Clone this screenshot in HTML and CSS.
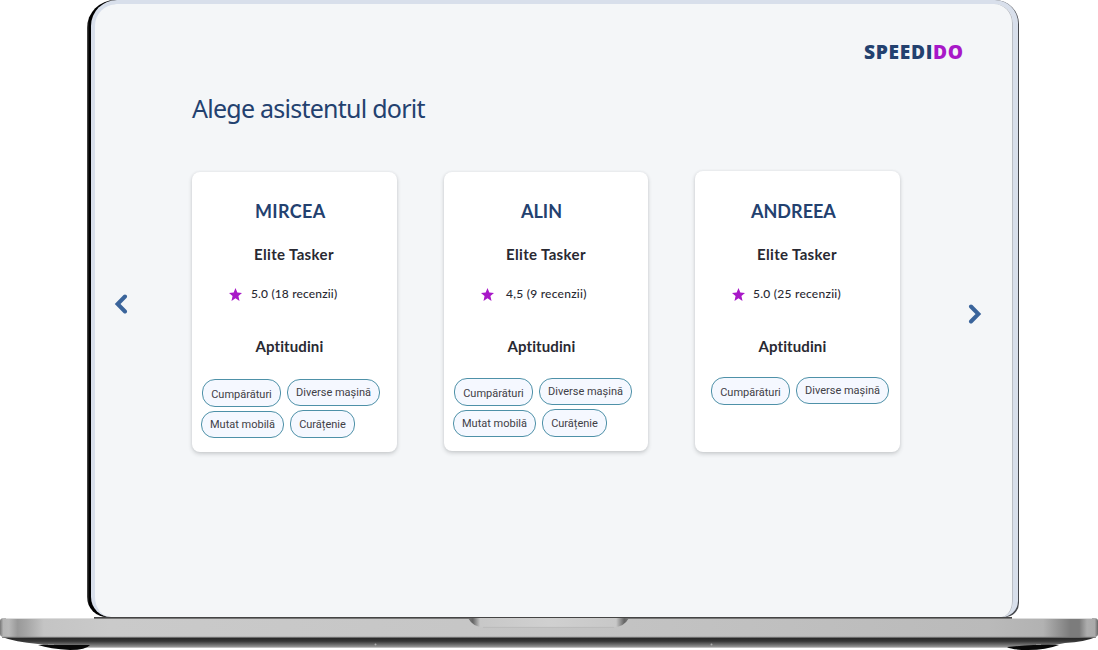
FILE: index.html
```html
<!DOCTYPE html>
<html lang="ro">
<head>
<meta charset="utf-8">
<title>Speedido</title>
<link rel="stylesheet" href="styles.css">
</head>
<body>
<svg class="symbols" width="0" height="0">
  <symbol id="star" viewBox="0 0 12 12"><path d="M6 0 7.7 4.1 12 4.5 8.7 7.4 9.7 12 6 9.5 2.3 12 3.3 7.4 0 4.5 4.3 4.1Z" fill="#a818c8"/></symbol>
</svg>
<div class="laptop">
  <div class="lid">
    <main class="screen">
      <header class="brand"><span class="logo">SPEEDI<span class="logo-accent">DO</span></span></header>
      <h1 class="title"><span>Alege asistentul dorit</span></h1>
      <div class="carousel">
        <button class="arrow prev" aria-label="Înapoi"><svg width="14" height="20" viewBox="0 0 14 20"><path d="M11 2.5 3.6 10 11 17.5" fill="none" stroke="#3a649b" stroke-width="4" stroke-linecap="round" stroke-linejoin="miter"/></svg></button>
        <section class="card">
          <h2 class="name mircea">MIRCEA</h2>
          <p class="role">Elite Tasker</p>
          <p class="rating"><svg class="star"><use href="#star"/></svg><span class="score r-mircea">5.0 (18 recenzii)</span></p>
          <h3 class="skills-title">Aptitudini</h3>
          <div class="chips">
            <div class="chip-row"><span class="chip buy">Cumpărături</span><span class="chip misc">Diverse mașină</span></div>
            <div class="chip-row second"><span class="chip move">Mutat mobilă</span><span class="chip clean">Curățenie</span></div>
          </div>
        </section>
        <section class="card card-alin">
          <h2 class="name alin">ALIN</h2>
          <p class="role">Elite Tasker</p>
          <p class="rating"><svg class="star"><use href="#star"/></svg><span class="score r-alin">4,5 (9 recenzii)</span></p>
          <h3 class="skills-title">Aptitudini</h3>
          <div class="chips">
            <div class="chip-row"><span class="chip buy">Cumpărături</span><span class="chip misc">Diverse mașină</span></div>
            <div class="chip-row second"><span class="chip move">Mutat mobilă</span><span class="chip clean">Curățenie</span></div>
          </div>
        </section>
        <section class="card card-andreea">
          <h2 class="name andreea">ANDREEA</h2>
          <p class="role">Elite Tasker</p>
          <p class="rating"><svg class="star"><use href="#star"/></svg><span class="score r-andreea">5.0 (25 recenzii)</span></p>
          <h3 class="skills-title">Aptitudini</h3>
          <div class="chips">
            <div class="chip-row"><span class="chip buy">Cumpărături</span><span class="chip misc">Diverse mașină</span></div>
          </div>
        </section>
        <button class="arrow next" aria-label="Înainte"><svg width="14" height="20" viewBox="0 0 14 20"><path d="M3 2.5 10.4 10 3 17.5" fill="none" stroke="#3a649b" stroke-width="4" stroke-linecap="round" stroke-linejoin="miter"/></svg></button>
      </div>
    </main>
  </div>
  <svg class="base" width="1098" height="33" viewBox="0 617 1098 33">
    <defs>
      <linearGradient id="metal" x1="0" x2="1" y1="0" y2="0">
        <stop offset="0" stop-color="#777"/><stop offset=".003" stop-color="#b5b5b5"/><stop offset=".008" stop-color="#b9b9b9"/><stop offset=".016" stop-color="#999"/><stop offset=".024" stop-color="#a5a5a5"/><stop offset=".04" stop-color="#c4c4c4"/><stop offset=".1" stop-color="#cacaca"/><stop offset=".5" stop-color="#c5c5c5"/><stop offset=".9" stop-color="#bababa"/><stop offset=".95" stop-color="#b2b2b2"/><stop offset=".975" stop-color="#7c7c7c"/><stop offset=".983" stop-color="#7c7c7c"/><stop offset=".99" stop-color="#adadad"/><stop offset=".997" stop-color="#aaa"/><stop offset="1" stop-color="#666"/>
      </linearGradient>
      <linearGradient id="under" x1="0" x2="0" y1="0" y2="1">
        <stop offset="0" stop-color="#555"/><stop offset=".12" stop-color="#292929"/><stop offset=".38" stop-color="#363636"/><stop offset=".65" stop-color="#666"/><stop offset=".9" stop-color="#959595"/><stop offset="1" stop-color="#e0e0e0"/>
      </linearGradient>
      <linearGradient id="notch" x1="0" x2="1" y1="0" y2="0">
        <stop offset="0" stop-color="#777"/><stop offset=".03" stop-color="#666"/><stop offset=".075" stop-color="#c8c8c8"/><stop offset=".5" stop-color="#d0d0d0"/><stop offset=".92" stop-color="#c8c8c8"/><stop offset=".97" stop-color="#666"/><stop offset="1" stop-color="#777"/>
      </linearGradient>
    </defs>
    <path d="M2 637H1096Q1085 642 1065 643L1040 648H60L38 644Q15 642 2 637Z" fill="url(#under)"/>
    <path d="M38 645H90Q86 650 70 650Q50 649 38 645Z" fill="#080808"/>
    <path d="M1007 647Q1040 644 1059 645Q1046 650 1028 650Q1012 650 1007 647Z" fill="#080808"/>
    <path d="M48 644.5H54M1036 644.5H1041" stroke="#888"/>
    <path d="M4 618H1094Q1098 618 1098 621V634Q1098 637 1094 637H4Q0 637 0 634V621Q0 618 4 618Z" fill="url(#metal)"/>
    <path d="M6 618.5H1092" stroke="#ddd"/>
    <path d="M2 637.3H1096" stroke="#777" stroke-width="1"/>
    <path d="M94 617.5H1012" stroke="#444"/>
    <path d="M94 618.5H1012" stroke="#777"/>
    <path d="M468 618H629Q624 627 614 627H483Q473 627 468 618Z" fill="url(#notch)"/>
    <path d="M483 627.4H614" stroke="#b4b4b4" stroke-width=".6"/>
    <circle cx="375.500" cy="644.500" r="1" fill="#aaa"/><circle cx="711.500" cy="644.500" r="1" fill="#aaa"/>
  </svg>
</div>
</body>
</html>
```
FILE: styles.css
```css
* { box-sizing: border-box; }
body { margin: 0; background: #fff; overflow: hidden; font-family: Lato, sans-serif; font-variant-ligatures: none; }
h1, h2, h3, p { margin: 0; font-weight: inherit; }
.symbols { position: absolute; }
.laptop { width: 1098px; height: 650px; display: flex; flex-direction: column; }
.lid {
  width: 932px; height: 617px; margin-left: 87px; padding: 0 1px 0 4px;
  background: linear-gradient(90deg, #555 0, #000 2px, #000 50%, #46484d 50%);
  border-radius: 28px 24px 14px 20px;
}
.screen {
  height: 617px; background: #f4f6f8; border: solid #d8dfeb; border-width: 4px 5px 0 4px;
  border-radius: 26px 23px 16px 20px; box-shadow: inset -1px 0 #b9bdc4;
}
.brand { height: 66px; padding: 33px 0 0 769px; line-height: 30px; }
.logo { font: 800 19.2px/30px "Open Sans", sans-serif; letter-spacing: .68px; color: #23416f; white-space: nowrap; }
.logo-accent { color: #a818c8; }
.title { height: 101px; padding: 19px 0 0 97px; font: 400 25px/38px "Noto Sans", sans-serif; letter-spacing: -.75px; color: #23416f; white-space: nowrap; }
.carousel { display: flex; align-items: flex-start; }
.arrow { width: 14px; height: 20px; padding: 0; border: 0; background: none; }
.arrow svg { display: block; }
.prev { margin: 123px 64px 0 19px; }
.next { margin: 133px 0 0 68px; }
.card {
  width: 205px; height: 280px; flex: none; margin: 1px 47px 0 0; border-radius: 8px; background: #fff;
  box-shadow: 0 2px 4px rgba(40, 45, 50, .2), 0 0 3px rgba(40, 45, 50, .07); white-space: nowrap;
}
.card-alin { height: 279px; width: 204px; }
.card-andreea { margin-right: 0; margin-top: 0; height: 281px; padding-top: 1px; }
.name { height: 68px; padding: 27px 0 0 63px; font-size: 18px; line-height: 24px; font-weight: 700; letter-spacing: .35px; color: #23416f; }
.alin { padding-left: 77px; letter-spacing: 0; }
.andreea { padding-left: 56px; letter-spacing: 0; }
.role { height: 42px; padding: 4px 0 0 62px; font-size: 15px; line-height: 20px; font-weight: 700; letter-spacing: .35px; color: #292932; }
.rating { height: 54px; padding: 4px 0 0 37px; display: flex; align-items: flex-start; font-size: 12px; line-height: 16px; font-weight: 500; letter-spacing: .15px; color: #292932; }
.star { width: 13px; height: 13px; margin: 2px 9px 0 0; }
.r-alin { margin-left: 3px; letter-spacing: .25px; }
.r-andreea { margin-left: -1px; letter-spacing: .25px; }
.skills-title { height: 43px; padding-left: 63.500px; font-size: 15px; line-height: 20px; font-weight: 700; letter-spacing: .1px; color: #292932; }
.chips { padding-left: 10px; font: 11px/26px Roboto, sans-serif; color: #3f4046; }
.card-alin .chips { margin-top: -1px; }
.card-andreea .chips { padding-left: 16px; margin-top: -2px; }
.chip-row { display: flex; height: 31px; }
.chip { height: 28px; border: 1px solid #4e91a8; border-radius: 13px; background: #f5f8ff; text-align: center; }
.buy { width: 79px; margin-right: 6px; line-height: 29px; }
.misc { width: 93px; height: 27px; }
.second { margin-left: -1px; }
.move { width: 83px; height: 27px; margin: 1px 6px 0 0; }
.clean { width: 65px; line-height: 28px; }
```
